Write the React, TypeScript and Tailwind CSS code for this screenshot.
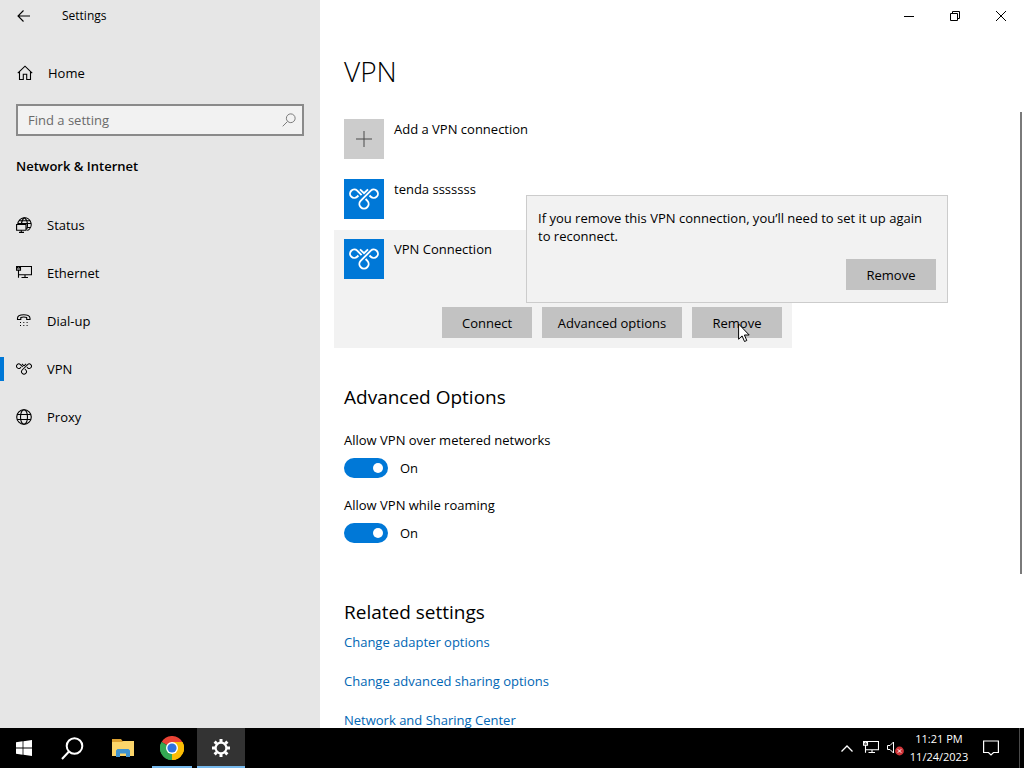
import { useState } from 'react';
import type { ReactNode, SVGProps } from 'react';

const FONT = "font-['Open_Sans','Noto_Sans',sans-serif]";

type IconProps = SVGProps<SVGSVGElement>;

function Icon({ children, ...props }: IconProps) {
  return (
    <svg width="16" height="16" viewBox="0 0 16 16" fill="none" stroke="currentColor" strokeWidth="1.1" aria-hidden="true" {...props}>
      {children}
    </svg>
  );
}

function StatusIcon() {
  return (
    <Icon>
      <path d="M1.8 7a6.7 6.7 0 1 1 9.500 6.600M3 3.800h11M2 6.500h13.200M11 10.500h3.500" />
      <path d="M8.500.6C6.600 2 5.600 4 5.400 6.800M8.500.6c2 1.800 3 4 3 6.800 0 2-.3 3.800-1 5.200" />
      <path d="M.6 7.500h9.400v5.700H.6z" fill="#e6e6e6" />
      <path d="M5.300 13.200v2M3 15.400h5" />
    </Icon>
  );
}

function EthernetIcon(props: IconProps) {
  return (
    <Icon {...props}>
      <path d="M4.500 1.500h11v8.200h-13V5M.5 1.500h4v3.600h-4zM9 9.700v3M2.500 9.700v3M5.500 12.500h6.500M1.500 1.500v1.500h2V1.500" />
    </Icon>
  );
}

function DialUpIcon() {
  return (
    <Icon>
      <path d="M1.500 5.200c0-4.600 12.500-4.600 12.500 0v1.300h-3.300V4.600c-1.600-.7-4.300-.7-5.900 0v1.900H1.500z" />
      <path d="M4 9.500h1M7.300 9.500h1M10.600 9.500h1M4 12.500h1M7.300 12.500h1M10.600 12.500h1" />
    </Icon>
  );
}

function VpnIcon(props: IconProps) {
  return (
    <svg width="16" height="12" viewBox="0 0 30 22" fill="none" stroke="currentColor" strokeWidth="1.900" aria-hidden="true" {...props}>
      <path d="m11 1.400 4 3.700 4-3.700" />
      <path d="M12.600 7.200 8.200 2.700a4.200 4.200 0 1 0 0 6l1.200-1.200" />
      <path d="m16.600 11 1.800 1.900a4.600 4.600 0 1 1-6.800 0L21.800 2.700a4.200 4.200 0 1 1 0 6l-1.300-1.200" />
    </svg>
  );
}

function ProxyIcon() {
  return (
    <Icon>
      <circle cx="8" cy="8" r="7.300" />
      <ellipse cx="8" cy="8" rx="3.500" ry="7.300" />
      <path d="M1.200 5.500h13.600M1.200 10.500h13.600" />
    </Icon>
  );
}

interface NavItem {
  label: string;
  icon: ReactNode;
}

const NAV_ITEMS: NavItem[] = [
  { label: 'Status', icon: <StatusIcon /> },
  { label: 'Ethernet', icon: <EthernetIcon /> },
  { label: 'Dial-up', icon: <DialUpIcon /> },
  { label: 'VPN', icon: <VpnIcon /> },
  { label: 'Proxy', icon: <ProxyIcon /> }
];

const RELATED_LINKS = ['Change adapter options', 'Change advanced sharing options', 'Network and Sharing Center'];

function Sidebar() {
  const [active, setActive] = useState('VPN');

  return (
    <aside className="w-80 shrink-0 bg-[#e6e6e6]">
      <div className="flex h-8 items-center">
        <button type="button" aria-label="Back" className="flex h-8 w-12 items-center justify-center">
          <Icon>
            <path d="M14 8H2M7.500 2.500 2 8l5.500 5.500" />
          </Icon>
        </button>
        <span className="pl-3.5 text-xs">Settings</span>
      </div>

      <button type="button" className="mt-[21px] flex h-10 w-full items-center gap-[15px] px-4 text-left">
        <Icon className="ml-px">
          <path d="M.8 8.200 8 1.200l7.200 7M2.500 6.600v7.900h3.800V9.200h3.400v5.300h3.800V6.600" />
        </Icon>
        Home
      </button>

      <div className="mx-4 mt-[11px] flex h-8 items-center border-2 border-[#8a8a8a] bg-[#f2f2f2] pr-1.5">
        <input
          type="text"
          aria-label="Find a setting"
          placeholder="Find a setting"
          className="min-w-0 flex-1 bg-transparent px-2.5 outline-none placeholder:text-[#6a6a6a]"
        />
        <Icon width="14" height="14" className="text-[#777777]">
          <circle cx="10" cy="6" r="5" />
          <path d="M6.300 9.700.8 15.200" />
        </Icon>
      </div>

      <h2 className="mt-5 px-4 font-semibold">Network &amp; Internet</h2>

      <nav className="mt-[25px]">
        {NAV_ITEMS.map(item => (
          <button
            key={item.label}
            type="button"
            onClick={() => setActive(item.label)}
            className="flex h-12 w-full items-center text-left"
          >
            <span className={`h-6 w-1 ${active === item.label ? 'bg-[#0078d7]' : ''}`} />
            <span className="ml-3 w-[31px]">{item.icon}</span>
            {item.label}
          </button>
        ))}
      </nav>
    </aside>
  );
}

function WindowControls() {
  return (
    <div className="flex h-8 justify-end">
      <button type="button" aria-label="Minimize" className="flex w-[46px] items-center justify-center">
        <svg width="10" height="10" viewBox="0 0 10 10" stroke="currentColor"><path d="M0 5.500h10" /></svg>
      </button>
      <button type="button" aria-label="Restore" className="flex w-[46px] items-center justify-center">
        <svg width="10" height="10" viewBox="0 0 10 10" fill="none" stroke="currentColor"><path d="M.5 2.500h7v7h-7zM2.500 2.500v-2h7v7h-2" /></svg>
      </button>
      <button type="button" aria-label="Close" className="flex w-[46px] items-center justify-center">
        <svg width="10" height="10" viewBox="0 0 10 10" stroke="currentColor"><path d="m0 0 10 10M10 0 0 10" /></svg>
      </button>
    </div>
  );
}

function VpnTile() {
  return (
    <span className="flex size-10 shrink-0 items-center justify-center bg-[#0078d7] text-white">
      <VpnIcon width="30" height="22" />
    </span>
  );
}

function GrayButton({ children, wide, onClick }: { children: ReactNode; wide?: boolean; onClick?: () => void }) {
  return (
    <button type="button" onClick={onClick} className={`h-[31px] bg-[#c2c2c2] text-center ${wide ? 'w-[140px]' : 'w-[90px]'}`}>
      {children}
    </button>
  );
}

function Toggle({ id, label }: { id: string; label: string }) {
  const [on, setOn] = useState(true);

  return (
    <div>
      <label htmlFor={id} className="block">{label}</label>
      <div className="mt-2 flex h-5 items-center gap-3">
        <input
          id={id}
          type="checkbox"
          role="switch"
          checked={on}
          onChange={e => setOn(e.target.checked)}
          className="flex h-5 w-11 appearance-none items-center rounded-full bg-[#888888] px-[5px] before:size-2.5 before:rounded-full before:bg-white checked:justify-end checked:bg-[#0078d7]"
        />
        <span>{on ? 'On' : 'Off'}</span>
      </div>
    </div>
  );
}

function VpnPage() {
  const [confirmOpen, setConfirmOpen] = useState(true);

  return (
    <div className="min-w-0 flex-1 pl-6">
      <h1 className="mt-[19px] text-[28px] leading-10 font-light">VPN</h1>

      <button type="button" className="mt-7 flex h-10 items-start gap-2.5 text-left">
        <span className="flex size-10 items-center justify-center bg-[#cccccc]">
          <svg width="16" height="16" viewBox="0 0 16 16" stroke="#4a4a4a"><path d="M8 0v16M0 8h16" /></svg>
        </span>
        Add a VPN connection
      </button>

      <button type="button" className="mt-5 flex h-10 items-start gap-2.5 text-left">
        <VpnTile />
        tenda sssssss
      </button>

      {/* Selected connection */}
      <section className="mt-[11px] -ml-2.5 max-w-[458px] bg-[#f2f2f2] px-2.5 pt-[9px] pb-2.5">
        <div className="flex items-start gap-2.5">
          <VpnTile />
          VPN Connection
        </div>
        <div className="mt-7 flex justify-end gap-2.5">
          <GrayButton>Connect</GrayButton>
          <GrayButton wide>Advanced options</GrayButton>
          <div className="relative">
            <GrayButton onClick={() => setConfirmOpen(!confirmOpen)}>Remove</GrayButton>
            {confirmOpen && (
              <div role="dialog" aria-label="Remove VPN connection" className="absolute bottom-full left-1/2 mb-1 w-[422px] -translate-x-1/2 border border-[#cccccc] bg-[#f2f2f2] px-[11px] pt-[13px] pb-3">
                <p className="leading-[18px]">
                  If you remove this VPN connection, you’ll need to set it up again to reconnect.
                </p>
                <div className="mt-3.5 flex justify-end">
                  <GrayButton onClick={() => setConfirmOpen(false)}>Remove</GrayButton>
                </div>
              </div>
            )}
            {/* Mouse pointer */}
            <svg className="pointer-events-none absolute top-4 left-[46px]" width="12" height="20" viewBox="0 0 12 20" aria-hidden="true">
              <path d="M.6 1v15.200l3.500-3.300 2.400 5.600 2.300-1-2.400-5.500h4.800z" fill="#fff" stroke="#000" />
            </svg>
          </div>
        </div>
      </section>

      <h2 className="mt-9 text-[19px] leading-[26px]">Advanced Options</h2>
      <div className="mt-5 flex flex-col gap-[17px]">
        <Toggle id="metered" label="Allow VPN over metered networks" />
        <Toggle id="roaming" label="Allow VPN while roaming" />
      </div>

      <h2 className="mt-14 text-[19px] leading-[26px]">Related settings</h2>
      <ul className="mt-[7px] flex flex-col gap-[19px]">
        {RELATED_LINKS.map(link => (
          <li key={link}>
            <a href="#" className="text-[#0066b4]">{link}</a>
          </li>
        ))}
      </ul>
    </div>
  );
}

function Taskbar() {
  return (
    <footer className="flex h-10 shrink-0 items-stretch bg-black text-white">
      <button type="button" aria-label="Start" className="flex w-12 items-center justify-center">
        <svg width="16" height="16" viewBox="0 0 16 16" fill="currentColor"><path d="M0 2.200 6.600 1.300v6.200H0zM7.400 1.200 16 0v7.500H7.400zM0 8.400h6.600v6.300L0 13.800zM7.400 8.400H16V16l-8.600-1.200z" /></svg>
      </button>
      <button type="button" aria-label="Search" className="flex w-12 items-center justify-center">
        <svg width="23" height="23" viewBox="0 0 23 23" fill="none" stroke="currentColor" strokeWidth="2"><circle cx="13.500" cy="9" r="7.800" /><path d="M8 14.500 1 22" /></svg>
      </button>
      <button type="button" aria-label="File Explorer" className="ml-[3px] flex w-12 items-center justify-center">
        <svg width="22" height="18" viewBox="0 0 22 18">
          <path d="M0 0h9l1.500 2H22v4H0z" fill="#dca131" />
          <path d="M0 3h10l1.500-1H22v15H0z" fill="#fbd56a" />
          <path d="M4 18v-6.500L5.500 10h11l1.500 1.500V18h-4v-3.500H8V18z" fill="#3f93cf" />
        </svg>
      </button>
      <button type="button" aria-label="Google Chrome" className="ml-[5px] flex w-10 items-center justify-center border-y-2 border-t-transparent border-b-[#76b9ed]">
        <svg width="24" height="24" viewBox="0 0 24 24">
          <path d="M12 12 1.600 6A12 12 0 0 1 22.400 6z" fill="#ea4335" />
          <path d="M12 12 22.400 6A12 12 0 0 1 12 24z" fill="#fbbc05" />
          <path d="M12 12v12A12 12 0 0 1 1.600 6z" fill="#34a853" />
          <path d="M12 6h10.400A12 12 0 0 1 12 24l5.200-9z" fill="#fbbc05" />
          <path d="M1.600 6 6.800 15 12 18l-.6 6A12 12 0 0 1 1.600 6z" fill="#34a853" />
          <circle cx="12" cy="12" r="6" fill="#fff" />
          <circle cx="12" cy="12" r="4.600" fill="#2f72e0" />
        </svg>
      </button>
      <button type="button" aria-label="Settings" className="ml-[5px] flex w-12 items-center justify-center border-y-2 border-t-[#333333] border-b-[#76b9ed] bg-[#333333]">
        <svg width="18" height="18" viewBox="0 0 18 18" fill="none" stroke="currentColor">
          <circle cx="9" cy="9" r="5.400" strokeWidth="2.200" />
          <path d="M9 0v3M9 15v3M0 9h3M15 9h3M2.600 2.600l2.200 2.200M13.200 13.200l2.200 2.200M15.400 2.600l-2.200 2.200M4.800 13.200l-2.200 2.200" strokeWidth="3" />
        </svg>
      </button>

      <div className="ml-auto flex items-center">
        <button type="button" aria-label="Show hidden icons" className="flex w-6 justify-center">
          <svg width="12" height="7" viewBox="0 0 12 7" fill="none" stroke="currentColor" strokeWidth="1.300"><path d="m.5 6.500 5.500-5.500 5.500 5.500" /></svg>
        </button>
        <button type="button" aria-label="Network" className="flex w-6 justify-center">
          <EthernetIcon />
        </button>
        <button type="button" aria-label="Volume muted" className="flex w-6 justify-center">
          <svg width="17" height="16" viewBox="0 0 17 16" fill="none" stroke="currentColor">
            <path d="M.5 5.500h2.500L6.500 2v11L3 9.500H.5z" />
            <circle cx="12.500" cy="11" r="4.400" fill="#d13438" stroke="none" />
            <path d="m10.800 9.300 3.400 3.400M14.200 9.300l-3.400 3.400" />
          </svg>
        </button>
        <div className="w-16 text-center text-[11px] leading-[18px] whitespace-nowrap">
          <div>11:21 PM</div>
          <div>11/24/2023</div>
        </div>
        <button type="button" aria-label="Notifications" className="flex w-10 justify-center">
          <svg width="16" height="16" viewBox="0 0 16 16" fill="none" stroke="currentColor" strokeWidth="1.200"><path d="M.6 1h14.800v11.500h-4.900L8 15l-2.500-2.500H.6z" /></svg>
        </button>
        <div className="ml-2 h-10 w-[5px] border-l border-[#4a4a4a]" />
      </div>
    </footer>
  );
}

export default function App() {
  return (
    <div className={`flex h-screen flex-col overflow-hidden bg-white text-[13px] leading-5 text-black ${FONT}`}>
      <div className="flex min-h-0 flex-1">
        <Sidebar />
        <main className="flex min-w-0 flex-1 flex-col overflow-hidden">
          <WindowControls />
          <div className="flex min-h-0 flex-1">
            <VpnPage />
            {/* Collapsed scroll bar */}
            <div className="w-1 pt-20">
              <div className="h-3/4 w-0.5 bg-[#7a7a7a]" />
            </div>
          </div>
        </main>
      </div>
      <Taskbar />
    </div>
  );
}
